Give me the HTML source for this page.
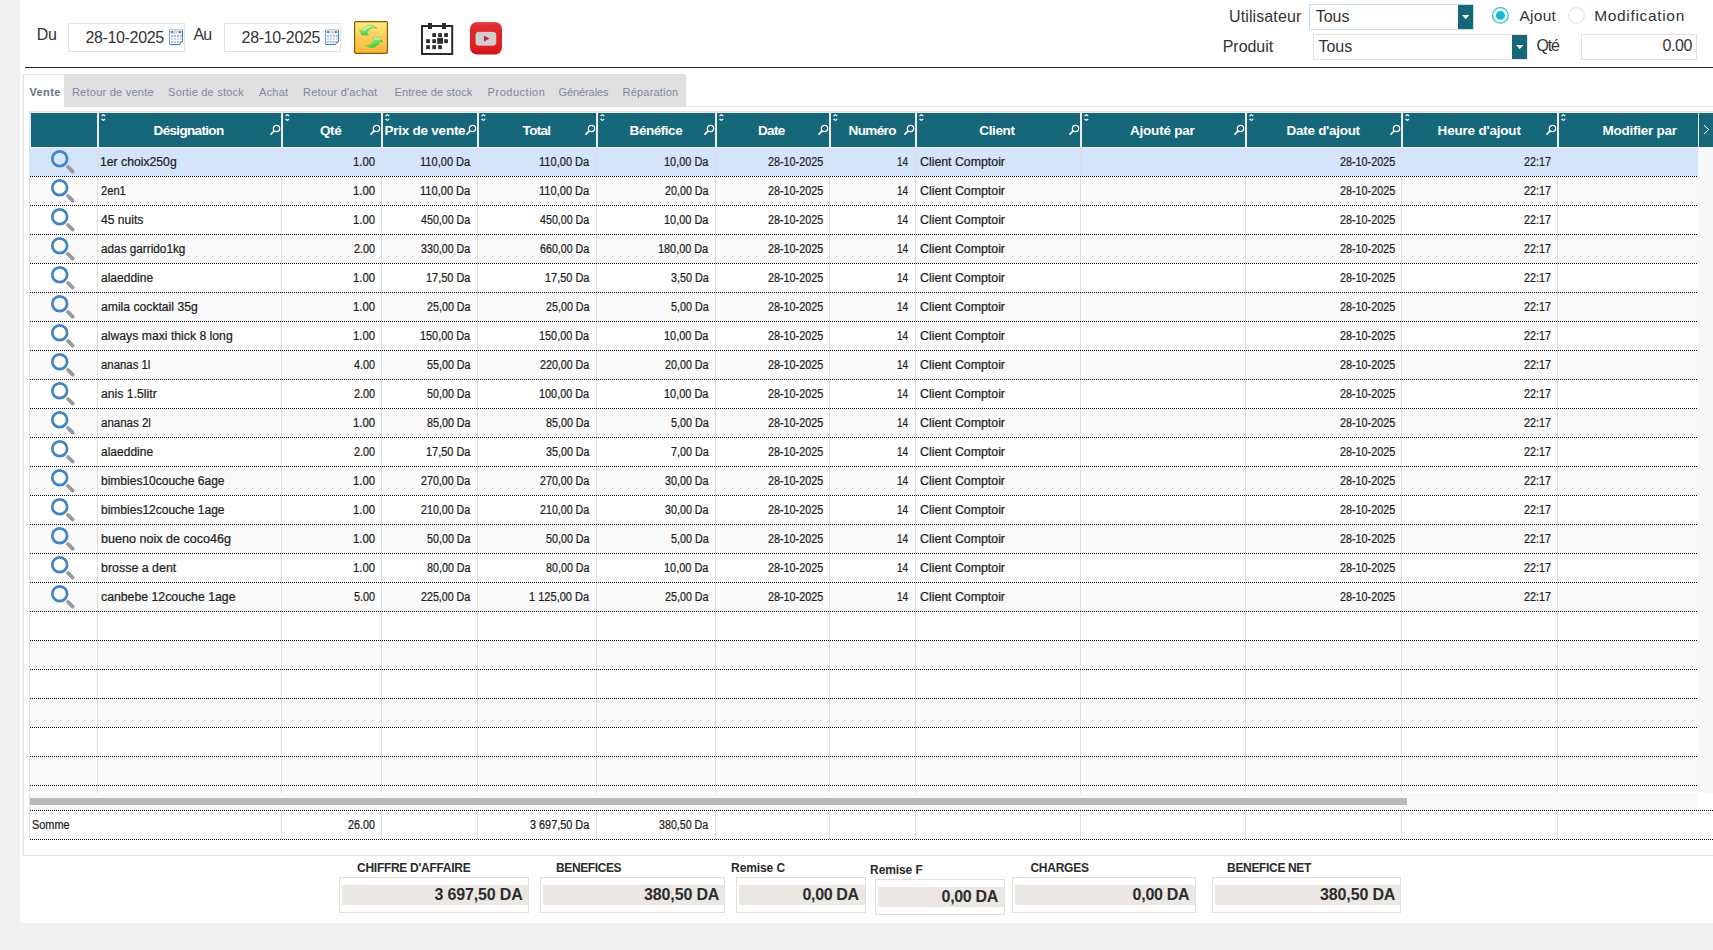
<!DOCTYPE html><html><head><meta charset="utf-8"><title>Etat</title><style>
*{box-sizing:border-box;margin:0;padding:0}
html,body{width:1713px;height:950px;overflow:hidden;background:#fff}
body{position:relative;font-family:"Liberation Sans",sans-serif;color:#222}
.a{position:absolute}
.t{position:absolute;white-space:nowrap;line-height:20px}
.k{-webkit-text-stroke:.22px #1c1c1c}
.inp{position:absolute;border:1px solid #e2e2e2;background:#fff}
.hc{position:absolute;top:113px;height:34px;background:#16677a}
.row{position:absolute;left:30px;width:1668px;height:29px}
.dot{position:absolute;height:1px;background-image:repeating-linear-gradient(90deg,#000 0,#000 1px,transparent 1px,transparent 2px)}
.vs{position:absolute;width:1px;background:#dedede}
.sb{position:absolute;border:1px solid #e0e0e0;background:#fff;height:36px}
.sf{position:absolute;left:2px;right:0;top:7px;height:20px;background:#ebe7e3}
</style></head><body>
<div class="a" style="left:0;top:0;width:20px;height:950px;background:#f0f0f0"></div>
<div class="a" style="left:0;top:923px;width:1713px;height:27px;background:#f0f0f0"></div>
<div class="a" style="left:25px;top:67px;width:1688px;height:1px;background:#222"></div>
<div class="t" style="left:36.80px;top:24.80px;font-size:16px;letter-spacing:-0.40px;color:#333;">Du</div>
<div class="inp" style="left:68px;top:23px;width:117px;height:29px"></div>
<div class="t" style="left:85.40px;top:28.10px;font-size:16px;letter-spacing:-0.34px;color:#333;">28-10-2025</div>
<div class="t" style="left:193.40px;top:24.80px;font-size:16px;letter-spacing:-0.90px;color:#333;">Au</div>
<div class="inp" style="left:224px;top:23px;width:117px;height:29px"></div>
<div class="t" style="left:241.60px;top:28.10px;font-size:16px;letter-spacing:-0.33px;color:#333;">28-10-2025</div>
<svg class="a" style="left:169px;top:29px" width="14" height="16" viewBox="0 0 14 16">
<path d="M.5 .5H13.5V12L10.5 15.5H.5Z" fill="#fff" stroke="#5b9fdc"/>
<path d="M13.5 1V12L10.5 15.5H1" fill="none" stroke="#3a7cc4"/>
<path d="M0 .5H14" stroke="#a8d8f2"/>
<rect x="1.4" y="1.4" width="11.2" height="3.2" fill="#d6d6d6"/>
<path d="M1.8 3L3.6 1.7V4.3Z M12.2 3L10.4 1.7V4.3Z" fill="#333"/>
<g fill="#8fb9ff"><rect x="2" y="6" width="1.9" height="1.9"/><rect x="5" y="6" width="1.9" height="1.9"/><rect x="8" y="6" width="1.9" height="1.9"/><rect x="11" y="6" width="1.9" height="1.9"/>
<rect x="2" y="12" width="1.9" height="1.9"/><rect x="5" y="12" width="1.9" height="1.9"/><rect x="8" y="12" width="1.9" height="1.9"/></g>
<g fill="#cfcfcf"><rect x="2" y="9" width="1.9" height="1.9"/><rect x="5" y="9" width="1.9" height="1.9"/><rect x="8" y="9" width="1.9" height="1.9"/><rect x="11" y="9" width="1.5" height="1.9"/></g>
<path d="M13.2 12.2L10.6 15.2V12.2Z" fill="#a9a9a9"/>
</svg>
<svg class="a" style="left:325px;top:29px" width="14" height="16" viewBox="0 0 14 16">
<path d="M.5 .5H13.5V12L10.5 15.5H.5Z" fill="#fff" stroke="#5b9fdc"/>
<path d="M13.5 1V12L10.5 15.5H1" fill="none" stroke="#3a7cc4"/>
<path d="M0 .5H14" stroke="#a8d8f2"/>
<rect x="1.4" y="1.4" width="11.2" height="3.2" fill="#d6d6d6"/>
<path d="M1.8 3L3.6 1.7V4.3Z M12.2 3L10.4 1.7V4.3Z" fill="#333"/>
<g fill="#8fb9ff"><rect x="2" y="6" width="1.9" height="1.9"/><rect x="5" y="6" width="1.9" height="1.9"/><rect x="8" y="6" width="1.9" height="1.9"/><rect x="11" y="6" width="1.9" height="1.9"/>
<rect x="2" y="12" width="1.9" height="1.9"/><rect x="5" y="12" width="1.9" height="1.9"/><rect x="8" y="12" width="1.9" height="1.9"/></g>
<g fill="#cfcfcf"><rect x="2" y="9" width="1.9" height="1.9"/><rect x="5" y="9" width="1.9" height="1.9"/><rect x="8" y="9" width="1.9" height="1.9"/><rect x="11" y="9" width="1.5" height="1.9"/></g>
<path d="M13.2 12.2L10.6 15.2V12.2Z" fill="#a9a9a9"/>
</svg>
<svg class="a" style="left:354px;top:21px" width="34" height="33" viewBox="0 0 34 33">
<defs><linearGradient id="gy" x1="0" y1="0" x2="0" y2="1"><stop offset="0" stop-color="#ffe97e"/><stop offset="1" stop-color="#ffb43a"/></linearGradient>
<linearGradient id="gg" x1="0" y1="0" x2=".6" y2="1"><stop offset="0" stop-color="#e4fbdc"/><stop offset=".45" stop-color="#7be868"/><stop offset="1" stop-color="#35c92a"/></linearGradient></defs>
<path d="M1.6 .6H32.4L33.4 1.6V31.4L32.4 32.4H1.6L.6 31.4V1.6Z" fill="url(#gy)" stroke="#8a5a06" stroke-width="1.2"/>
<path d="M5.2 8.6L7.6 14.2L14.8 14.2L13.2 12C14 10 16 7.5 20.4 6.6L23 7.8C21.5 5.3 19 4.2 17 4.2C13 4.2 10 6.5 7.2 9.8Z" fill="url(#gg)" stroke="#7cc65f" stroke-width=".5"/>
<path d="M8.6 9.2C11 6 15 4.7 19.6 5.2C16 5.7 12 7.7 9.8 10.2Z" fill="#fff" opacity=".6"/>
<path d="M21.6 6.3L23 7.8L21.2 5.4Z" fill="#2a8f2a"/>
<path d="M11.2 24C13 26 15.5 26.8 18 26.8C22 26.5 25 23 26.6 20.4L28.6 21L25.6 16.2L18.2 16.6L20.6 18.4C19.5 21 17 23.8 13.2 24.4Z" fill="url(#gg)" stroke="#7cc65f" stroke-width=".5"/>
<path d="M20 17L25.4 16.7L26.9 19.3C25 18.3 22.5 18.3 21.3 18.7Z" fill="#fff" opacity=".55"/>
<path d="M28.6 21L27.2 18.9L27 20.5Z" fill="#2a8f2a"/>
</svg>
<svg class="a" style="left:420px;top:22px" width="35" height="34" viewBox="0 0 35 34">
<rect x="2" y="4" width="30.2" height="28" fill="#fff" stroke="#2b2b2b" stroke-width="2"/>
<g fill="#2b2b2b"><rect x="8" y="1" width="4" height="6"/><rect x="22" y="1" width="4" height="6"/>
<rect x="12.3" y="11.1" width="3.7" height="3.9"/><rect x="18.2" y="11.1" width="3.7" height="3.9"/><rect x="24.2" y="11.1" width="3.7" height="3.9"/>
<rect x="6.2" y="17.2" width="3.7" height="3.9"/><rect x="12.3" y="17.2" width="3.7" height="3.9"/><rect x="24.2" y="17.2" width="3.7" height="3.9"/>
<rect x="6.2" y="23.2" width="3.7" height="3.9"/><rect x="12.3" y="23.2" width="3.7" height="3.9"/><rect x="18.2" y="23.2" width="3.7" height="3.9"/>
<rect x="17.2" y="15.8" width="5.8" height="6"/></g></svg>
<svg class="a" style="left:470px;top:22px" width="32" height="33" viewBox="0 0 32 33">
<defs><linearGradient id="gr" x1="0" y1="0" x2="0" y2="1"><stop offset="0" stop-color="#e7484c"/><stop offset=".12" stop-color="#e02a2f"/><stop offset=".75" stop-color="#de1f25"/><stop offset="1" stop-color="#cc1219"/></linearGradient></defs>
<rect x="0" y="0" width="32" height="32.6" rx="7" fill="url(#gr)"/>
<rect x="6" y="10.3" width="19.8" height="12.9" rx="2.4" fill="#cfcfcf" stroke="#d3e6e6" stroke-width=".7"/>
<path d="M14 13.8L19.6 16.6L14 19.4Z" fill="#e01b24"/></svg>

<div class="t" style="left:1229.10px;top:7.10px;font-size:16px;letter-spacing:0.10px;color:#333;">Utilisateur</div>
<div class="inp" style="left:1309px;top:4px;width:165px;height:26px;border-color:#c6dbf4"></div>
<div class="t" style="left:1315.70px;top:7.00px;font-size:16px;letter-spacing:-0.03px;color:#333;">Tous</div>
<div class="a" style="left:1458px;top:5px;width:15px;height:24px;background:#16677a"></div>
<svg class="a" style="left:1462px;top:15px" width="8" height="5"><path d="M0 0H7.4L3.7 4Z" fill="#fff"/></svg>
<div class="t" style="left:1222.70px;top:36.90px;font-size:16px;letter-spacing:-0.03px;color:#333;">Produit</div>
<div class="inp" style="left:1313px;top:34px;width:215px;height:26px"></div>
<div class="t" style="left:1318.50px;top:36.90px;font-size:16px;letter-spacing:-0.03px;color:#333;">Tous</div>
<div class="a" style="left:1512px;top:35px;width:15px;height:24px;background:#16677a"></div>
<svg class="a" style="left:1516px;top:45px" width="8" height="5"><path d="M0 0H7.4L3.7 4Z" fill="#fff"/></svg>
<div class="t" style="left:1536.50px;top:35.60px;font-size:16px;letter-spacing:-1.20px;color:#333;">Qté</div>
<div class="inp" style="left:1581px;top:34px;width:116px;height:26px"></div>
<div class="t" style="left:1662.40px;top:36.40px;font-size:16px;letter-spacing:-0.40px;color:#333;">0.00</div>
<svg class="a" style="left:1491px;top:6px" width="19" height="19"><circle cx="9.4" cy="9.4" r="7.8" fill="#fff" stroke="#22c0da" stroke-width="1.25"/><circle cx="9.4" cy="9.4" r="4.5" fill="#12bcd8"/></svg>
<div class="t" style="left:1519.50px;top:5.80px;font-size:15.5px;letter-spacing:0.27px;color:#333;">Ajout</div>
<svg class="a" style="left:1567px;top:6px" width="19" height="19"><circle cx="9.5" cy="9.4" r="7.8" fill="#fff" stroke="#e4e4e4" stroke-width="1.2"/></svg>
<div class="t" style="left:1594.20px;top:5.80px;font-size:15.5px;letter-spacing:0.67px;color:#333;">Modification</div>
<div class="a" style="left:23px;top:74px;width:1px;height:782px;background:#e0e0e0"></div>
<div class="a" style="left:23px;top:855px;width:1690px;height:1px;background:#e0e0e0"></div>
<div class="a" style="left:24px;top:74px;width:40px;height:1px;background:#e6e6e6"></div>
<div class="a" style="left:64px;top:74px;width:622px;height:33px;background:#e0e0e0"></div>
<div class="a" style="left:686px;top:106px;width:1027px;height:1px;background:#e9e9e9"></div>
<div class="t" style="left:29.40px;top:81.90px;font-size:11px;font-weight:bold;letter-spacing:0.40px;color:#687086;">Vente</div>
<div class="t" style="left:71.90px;top:81.90px;font-size:11px;letter-spacing:0.25px;color:#7d86a0;">Retour de vente</div>
<div class="t" style="left:168.10px;top:81.90px;font-size:11px;letter-spacing:0.20px;color:#7d86a0;">Sortie de stock</div>
<div class="t" style="left:259.10px;top:81.90px;font-size:11px;letter-spacing:0.20px;color:#7d86a0;">Achat</div>
<div class="t" style="left:303.10px;top:81.90px;font-size:11px;letter-spacing:0.22px;color:#7d86a0;">Retour d'achat</div>
<div class="t" style="left:394.60px;top:81.90px;font-size:11px;letter-spacing:0.09px;color:#7d86a0;">Entree de stock</div>
<div class="t" style="left:487.60px;top:81.90px;font-size:11px;letter-spacing:0.52px;color:#7d86a0;">Production</div>
<div class="t" style="left:558.40px;top:81.90px;font-size:11px;letter-spacing:-0.07px;color:#7d86a0;">Générales</div>
<div class="t" style="left:622.50px;top:81.90px;font-size:11px;letter-spacing:0.21px;color:#7d86a0;">Réparation</div>
<div class="a" style="left:29px;top:111px;width:1684px;height:37px;background:#efebea"></div>
<div class="a" style="left:29px;top:111px;width:1684px;height:1px;background:#e3e3e3"></div>
<div class="a" style="left:29px;top:111px;width:1px;height:729px;background:#e3e3e3"></div>
<div class="hc" style="left:31px;width:66px"></div>
<div class="hc" style="left:99px;width:182px"></div>
<div class="t" style="left:153.60px;top:121.00px;font-size:13.5px;font-weight:bold;letter-spacing:-0.67px;color:#fff;">Désignation</div>
<svg class="a" style="left:100.6px;top:113px" width="6" height="9" viewBox="0 0 6 9"><path d="M.5 2.9L2.4 1.7L4.3 2.9M.5 5.9L2.4 7.2L4.3 5.9" fill="none" stroke="#fff" stroke-width="1.2"/></svg>
<svg class="a" style="left:269px;top:124px" width="12" height="12" viewBox="0 0 12 12"><circle cx="7.5" cy="4.5" r="3.2" fill="none" stroke="#fff" stroke-width="1.2"/><path d="M5.1 6.9L2 10.2" stroke="#fff" stroke-width="1.7" stroke-linecap="round"/></svg>
<div class="hc" style="left:283px;width:98px"></div>
<div class="t" style="left:320.10px;top:121.00px;font-size:13.5px;font-weight:bold;letter-spacing:-0.48px;color:#fff;">Qté</div>
<svg class="a" style="left:284.6px;top:113px" width="6" height="9" viewBox="0 0 6 9"><path d="M.5 2.9L2.4 1.7L4.3 2.9M.5 5.9L2.4 7.2L4.3 5.9" fill="none" stroke="#fff" stroke-width="1.2"/></svg>
<svg class="a" style="left:369px;top:124px" width="12" height="12" viewBox="0 0 12 12"><circle cx="7.5" cy="4.5" r="3.2" fill="none" stroke="#fff" stroke-width="1.2"/><path d="M5.1 6.9L2 10.2" stroke="#fff" stroke-width="1.7" stroke-linecap="round"/></svg>
<div class="hc" style="left:383px;width:94px"></div>
<div class="t" style="left:384.60px;top:121.00px;font-size:13.5px;font-weight:bold;letter-spacing:-0.25px;color:#fff;">Prix de vente</div>
<svg class="a" style="left:384.6px;top:113px" width="6" height="9" viewBox="0 0 6 9"><path d="M.5 2.9L2.4 1.7L4.3 2.9M.5 5.9L2.4 7.2L4.3 5.9" fill="none" stroke="#fff" stroke-width="1.2"/></svg>
<svg class="a" style="left:465px;top:124px" width="12" height="12" viewBox="0 0 12 12"><circle cx="7.5" cy="4.5" r="3.2" fill="none" stroke="#fff" stroke-width="1.2"/><path d="M5.1 6.9L2 10.2" stroke="#fff" stroke-width="1.7" stroke-linecap="round"/></svg>
<div class="hc" style="left:479px;width:117px"></div>
<div class="t" style="left:522.60px;top:121.00px;font-size:13.5px;font-weight:bold;letter-spacing:-0.68px;color:#fff;">Total</div>
<svg class="a" style="left:480.6px;top:113px" width="6" height="9" viewBox="0 0 6 9"><path d="M.5 2.9L2.4 1.7L4.3 2.9M.5 5.9L2.4 7.2L4.3 5.9" fill="none" stroke="#fff" stroke-width="1.2"/></svg>
<svg class="a" style="left:584px;top:124px" width="12" height="12" viewBox="0 0 12 12"><circle cx="7.5" cy="4.5" r="3.2" fill="none" stroke="#fff" stroke-width="1.2"/><path d="M5.1 6.9L2 10.2" stroke="#fff" stroke-width="1.7" stroke-linecap="round"/></svg>
<div class="hc" style="left:598px;width:117px"></div>
<div class="t" style="left:629.60px;top:121.00px;font-size:13.5px;font-weight:bold;letter-spacing:-0.46px;color:#fff;">Bénéfice</div>
<svg class="a" style="left:599.6px;top:113px" width="6" height="9" viewBox="0 0 6 9"><path d="M.5 2.9L2.4 1.7L4.3 2.9M.5 5.9L2.4 7.2L4.3 5.9" fill="none" stroke="#fff" stroke-width="1.2"/></svg>
<svg class="a" style="left:703px;top:124px" width="12" height="12" viewBox="0 0 12 12"><circle cx="7.5" cy="4.5" r="3.2" fill="none" stroke="#fff" stroke-width="1.2"/><path d="M5.1 6.9L2 10.2" stroke="#fff" stroke-width="1.7" stroke-linecap="round"/></svg>
<div class="hc" style="left:717px;width:112px"></div>
<div class="t" style="left:758.10px;top:121.00px;font-size:13.5px;font-weight:bold;letter-spacing:-0.73px;color:#fff;">Date</div>
<svg class="a" style="left:718.6px;top:113px" width="6" height="9" viewBox="0 0 6 9"><path d="M.5 2.9L2.4 1.7L4.3 2.9M.5 5.9L2.4 7.2L4.3 5.9" fill="none" stroke="#fff" stroke-width="1.2"/></svg>
<svg class="a" style="left:817px;top:124px" width="12" height="12" viewBox="0 0 12 12"><circle cx="7.5" cy="4.5" r="3.2" fill="none" stroke="#fff" stroke-width="1.2"/><path d="M5.1 6.9L2 10.2" stroke="#fff" stroke-width="1.7" stroke-linecap="round"/></svg>
<div class="hc" style="left:831px;width:84px"></div>
<div class="t" style="left:848.60px;top:121.00px;font-size:13.5px;font-weight:bold;letter-spacing:-0.64px;color:#fff;">Numéro</div>
<svg class="a" style="left:832.6px;top:113px" width="6" height="9" viewBox="0 0 6 9"><path d="M.5 2.9L2.4 1.7L4.3 2.9M.5 5.9L2.4 7.2L4.3 5.9" fill="none" stroke="#fff" stroke-width="1.2"/></svg>
<svg class="a" style="left:903px;top:124px" width="12" height="12" viewBox="0 0 12 12"><circle cx="7.5" cy="4.5" r="3.2" fill="none" stroke="#fff" stroke-width="1.2"/><path d="M5.1 6.9L2 10.2" stroke="#fff" stroke-width="1.7" stroke-linecap="round"/></svg>
<div class="hc" style="left:917px;width:163px"></div>
<div class="t" style="left:979.35px;top:121.00px;font-size:13.5px;font-weight:bold;letter-spacing:-0.39px;color:#fff;">Client</div>
<svg class="a" style="left:918.6px;top:113px" width="6" height="9" viewBox="0 0 6 9"><path d="M.5 2.9L2.4 1.7L4.3 2.9M.5 5.9L2.4 7.2L4.3 5.9" fill="none" stroke="#fff" stroke-width="1.2"/></svg>
<svg class="a" style="left:1068px;top:124px" width="12" height="12" viewBox="0 0 12 12"><circle cx="7.5" cy="4.5" r="3.2" fill="none" stroke="#fff" stroke-width="1.2"/><path d="M5.1 6.9L2 10.2" stroke="#fff" stroke-width="1.7" stroke-linecap="round"/></svg>
<div class="hc" style="left:1082px;width:163px"></div>
<div class="t" style="left:1130.10px;top:121.00px;font-size:13.5px;font-weight:bold;letter-spacing:-0.24px;color:#fff;">Ajouté par</div>
<svg class="a" style="left:1083.6px;top:113px" width="6" height="9" viewBox="0 0 6 9"><path d="M.5 2.9L2.4 1.7L4.3 2.9M.5 5.9L2.4 7.2L4.3 5.9" fill="none" stroke="#fff" stroke-width="1.2"/></svg>
<svg class="a" style="left:1233px;top:124px" width="12" height="12" viewBox="0 0 12 12"><circle cx="7.5" cy="4.5" r="3.2" fill="none" stroke="#fff" stroke-width="1.2"/><path d="M5.1 6.9L2 10.2" stroke="#fff" stroke-width="1.7" stroke-linecap="round"/></svg>
<div class="hc" style="left:1247px;width:154px"></div>
<div class="t" style="left:1286.60px;top:121.00px;font-size:13.5px;font-weight:bold;letter-spacing:-0.29px;color:#fff;">Date d'ajout</div>
<svg class="a" style="left:1248.6px;top:113px" width="6" height="9" viewBox="0 0 6 9"><path d="M.5 2.9L2.4 1.7L4.3 2.9M.5 5.9L2.4 7.2L4.3 5.9" fill="none" stroke="#fff" stroke-width="1.2"/></svg>
<svg class="a" style="left:1389px;top:124px" width="12" height="12" viewBox="0 0 12 12"><circle cx="7.5" cy="4.5" r="3.2" fill="none" stroke="#fff" stroke-width="1.2"/><path d="M5.1 6.9L2 10.2" stroke="#fff" stroke-width="1.7" stroke-linecap="round"/></svg>
<div class="hc" style="left:1403px;width:154px"></div>
<div class="t" style="left:1437.60px;top:121.00px;font-size:13.5px;font-weight:bold;letter-spacing:-0.20px;color:#fff;">Heure d'ajout</div>
<svg class="a" style="left:1404.6px;top:113px" width="6" height="9" viewBox="0 0 6 9"><path d="M.5 2.9L2.4 1.7L4.3 2.9M.5 5.9L2.4 7.2L4.3 5.9" fill="none" stroke="#fff" stroke-width="1.2"/></svg>
<svg class="a" style="left:1545px;top:124px" width="12" height="12" viewBox="0 0 12 12"><circle cx="7.5" cy="4.5" r="3.2" fill="none" stroke="#fff" stroke-width="1.2"/><path d="M5.1 6.9L2 10.2" stroke="#fff" stroke-width="1.7" stroke-linecap="round"/></svg>
<div class="hc" style="left:1559px;width:139px"></div>
<div class="t" style="left:1602.60px;top:121.00px;font-size:13.5px;font-weight:bold;letter-spacing:-0.25px;color:#fff;">Modifier par</div>
<svg class="a" style="left:1560.6px;top:113px" width="6" height="9" viewBox="0 0 6 9"><path d="M.5 2.9L2.4 1.7L4.3 2.9M.5 5.9L2.4 7.2L4.3 5.9" fill="none" stroke="#fff" stroke-width="1.2"/></svg>
<div class="hc" style="left:1699px;width:14px"></div>
<svg class="a" style="left:1702px;top:123px" width="9" height="13" viewBox="0 0 9 13"><path d="M2 2.2L6.7 6.6L2 11" fill="none" stroke="#fff" stroke-width="1"/></svg>
<div class="row" style="top:147px;background:#d4e5fb"></div>
<div class="row" style="top:176px;background:#f9f9f9"></div>
<div class="row" style="top:205px;background:#fff"></div>
<div class="row" style="top:234px;background:#f9f9f9"></div>
<div class="row" style="top:263px;background:#fff"></div>
<div class="row" style="top:292px;background:#f9f9f9"></div>
<div class="row" style="top:321px;background:#fff"></div>
<div class="row" style="top:350px;background:#f9f9f9"></div>
<div class="row" style="top:379px;background:#fff"></div>
<div class="row" style="top:408px;background:#f9f9f9"></div>
<div class="row" style="top:437px;background:#fff"></div>
<div class="row" style="top:466px;background:#f9f9f9"></div>
<div class="row" style="top:495px;background:#fff"></div>
<div class="row" style="top:524px;background:#f9f9f9"></div>
<div class="row" style="top:553px;background:#fff"></div>
<div class="row" style="top:582px;background:#f9f9f9"></div>
<div class="row" style="top:611px;background:#fff"></div>
<div class="row" style="top:640px;background:#f9f9f9"></div>
<div class="row" style="top:669px;background:#fff"></div>
<div class="row" style="top:698px;background:#f9f9f9"></div>
<div class="row" style="top:727px;background:#fff"></div>
<div class="row" style="top:756px;background:#f9f9f9"></div>
<div class="a" style="left:30px;top:147px;width:1683px;height:1px;background:#efecec"></div>
<div class="a" style="left:30px;top:786px;width:1668px;height:7px;background:#fff"></div>
<div class="a" style="left:1698px;top:148px;width:15px;height:645px;background:#f8f8f8"></div>
<div class="vs" style="left:97px;top:148px;height:645px"></div>
<div class="vs" style="left:281px;top:148px;height:645px"></div>
<div class="vs" style="left:381px;top:148px;height:645px"></div>
<div class="vs" style="left:477px;top:148px;height:645px"></div>
<div class="vs" style="left:596px;top:148px;height:645px"></div>
<div class="vs" style="left:715px;top:148px;height:645px"></div>
<div class="vs" style="left:829px;top:148px;height:645px"></div>
<div class="vs" style="left:915px;top:148px;height:645px"></div>
<div class="vs" style="left:1080px;top:148px;height:645px"></div>
<div class="vs" style="left:1245px;top:148px;height:645px"></div>
<div class="vs" style="left:1401px;top:148px;height:645px"></div>
<div class="vs" style="left:1557px;top:148px;height:645px"></div>
<div class="dot" style="left:30px;top:176px;width:1668px"></div>
<div class="dot" style="left:30px;top:205px;width:1668px"></div>
<div class="dot" style="left:30px;top:234px;width:1668px"></div>
<div class="dot" style="left:30px;top:263px;width:1668px"></div>
<div class="dot" style="left:30px;top:292px;width:1668px"></div>
<div class="dot" style="left:30px;top:321px;width:1668px"></div>
<div class="dot" style="left:30px;top:350px;width:1668px"></div>
<div class="dot" style="left:30px;top:379px;width:1668px"></div>
<div class="dot" style="left:30px;top:408px;width:1668px"></div>
<div class="dot" style="left:30px;top:437px;width:1668px"></div>
<div class="dot" style="left:30px;top:466px;width:1668px"></div>
<div class="dot" style="left:30px;top:495px;width:1668px"></div>
<div class="dot" style="left:30px;top:524px;width:1668px"></div>
<div class="dot" style="left:30px;top:553px;width:1668px"></div>
<div class="dot" style="left:30px;top:582px;width:1668px"></div>
<div class="dot" style="left:30px;top:611px;width:1668px"></div>
<div class="dot" style="left:30px;top:640px;width:1668px"></div>
<div class="dot" style="left:30px;top:669px;width:1668px"></div>
<div class="dot" style="left:30px;top:698px;width:1668px"></div>
<div class="dot" style="left:30px;top:727px;width:1668px"></div>
<div class="dot" style="left:30px;top:756px;width:1668px"></div>
<div class="dot" style="left:30px;top:785px;width:1668px"></div>
<svg class="a" style="left:49px;top:148px" width="28" height="28" viewBox="0 0 28 28"><circle cx="10.7" cy="10.8" r="7.4" fill="none" stroke="#4284c0" stroke-width="2.7"/><path d="M19 19L23.7 23.6" stroke="#999" stroke-width="3.8" stroke-linecap="round"/></svg>
<div class="t k" style="left:100.18px;top:151.70px;font-size:12px;color:#1c1c1c;transform-origin:0 0;transform:scaleX(1.0175);">1er choix250g</div>
<div class="t k" style="left:353.25px;top:151.70px;font-size:12px;color:#1c1c1c;transform-origin:0 0;transform:scaleX(0.9459);">1.00</div>
<div class="t k" style="left:420.17px;top:151.70px;font-size:12px;color:#1c1c1c;transform-origin:0 0;transform:scaleX(0.9225);">110,00 Da</div>
<div class="t k" style="left:539.17px;top:151.70px;font-size:12px;color:#1c1c1c;transform-origin:0 0;transform:scaleX(0.9225);">110,00 Da</div>
<div class="t k" style="left:664.08px;top:151.70px;font-size:12px;color:#1c1c1c;transform-origin:0 0;transform:scaleX(0.9129);">10,00 Da</div>
<div class="t k" style="left:767.79px;top:151.70px;font-size:12px;color:#1c1c1c;transform-origin:0 0;transform:scaleX(0.8987);">28-10-2025</div>
<div class="t k" style="left:897.35px;top:151.70px;font-size:12px;color:#1c1c1c;transform-origin:0 0;transform:scaleX(0.8333);">14</div>
<div class="t k" style="left:1339.69px;top:151.70px;font-size:12px;color:#1c1c1c;transform-origin:0 0;transform:scaleX(0.8987);">28-10-2025</div>
<div class="t k" style="left:1524.09px;top:151.70px;font-size:12px;color:#1c1c1c;transform-origin:0 0;transform:scaleX(0.8940);">22:17</div>
<div class="t k" style="left:919.60px;top:151.70px;font-size:12px;color:#1c1c1c;transform-origin:0 0;transform:scaleX(1.0276);">Client Comptoir</div>
<svg class="a" style="left:49px;top:177px" width="28" height="28" viewBox="0 0 28 28"><circle cx="10.7" cy="10.8" r="7.4" fill="none" stroke="#4284c0" stroke-width="2.7"/><path d="M19 19L23.7 23.6" stroke="#999" stroke-width="3.8" stroke-linecap="round"/></svg>
<div class="t k" style="left:101.19px;top:180.70px;font-size:12px;color:#1c1c1c;transform-origin:0 0;transform:scaleX(0.9283);">2en1</div>
<div class="t k" style="left:353.25px;top:180.70px;font-size:12px;color:#1c1c1c;transform-origin:0 0;transform:scaleX(0.9459);">1.00</div>
<div class="t k" style="left:420.17px;top:180.70px;font-size:12px;color:#1c1c1c;transform-origin:0 0;transform:scaleX(0.9225);">110,00 Da</div>
<div class="t k" style="left:539.17px;top:180.70px;font-size:12px;color:#1c1c1c;transform-origin:0 0;transform:scaleX(0.9225);">110,00 Da</div>
<div class="t k" style="left:664.99px;top:180.70px;font-size:12px;color:#1c1c1c;transform-origin:0 0;transform:scaleX(0.8943);">20,00 Da</div>
<div class="t k" style="left:767.79px;top:180.70px;font-size:12px;color:#1c1c1c;transform-origin:0 0;transform:scaleX(0.8987);">28-10-2025</div>
<div class="t k" style="left:897.35px;top:180.70px;font-size:12px;color:#1c1c1c;transform-origin:0 0;transform:scaleX(0.8333);">14</div>
<div class="t k" style="left:1339.69px;top:180.70px;font-size:12px;color:#1c1c1c;transform-origin:0 0;transform:scaleX(0.8987);">28-10-2025</div>
<div class="t k" style="left:1524.09px;top:180.70px;font-size:12px;color:#1c1c1c;transform-origin:0 0;transform:scaleX(0.8940);">22:17</div>
<div class="t k" style="left:919.60px;top:180.70px;font-size:12px;color:#1c1c1c;transform-origin:0 0;transform:scaleX(1.0276);">Client Comptoir</div>
<svg class="a" style="left:49px;top:206px" width="28" height="28" viewBox="0 0 28 28"><circle cx="10.7" cy="10.8" r="7.4" fill="none" stroke="#4284c0" stroke-width="2.7"/><path d="M19 19L23.7 23.6" stroke="#999" stroke-width="3.8" stroke-linecap="round"/></svg>
<div class="t k" style="left:101.20px;top:209.70px;font-size:12px;color:#1c1c1c;transform-origin:0 0;transform:scaleX(1.0071);">45 nuits</div>
<div class="t k" style="left:353.25px;top:209.70px;font-size:12px;color:#1c1c1c;transform-origin:0 0;transform:scaleX(0.9459);">1.00</div>
<div class="t k" style="left:421.09px;top:209.70px;font-size:12px;color:#1c1c1c;transform-origin:0 0;transform:scaleX(0.8897);">450,00 Da</div>
<div class="t k" style="left:540.09px;top:209.70px;font-size:12px;color:#1c1c1c;transform-origin:0 0;transform:scaleX(0.8897);">450,00 Da</div>
<div class="t k" style="left:664.08px;top:209.70px;font-size:12px;color:#1c1c1c;transform-origin:0 0;transform:scaleX(0.9129);">10,00 Da</div>
<div class="t k" style="left:767.79px;top:209.70px;font-size:12px;color:#1c1c1c;transform-origin:0 0;transform:scaleX(0.8987);">28-10-2025</div>
<div class="t k" style="left:897.35px;top:209.70px;font-size:12px;color:#1c1c1c;transform-origin:0 0;transform:scaleX(0.8333);">14</div>
<div class="t k" style="left:1339.69px;top:209.70px;font-size:12px;color:#1c1c1c;transform-origin:0 0;transform:scaleX(0.8987);">28-10-2025</div>
<div class="t k" style="left:1524.09px;top:209.70px;font-size:12px;color:#1c1c1c;transform-origin:0 0;transform:scaleX(0.8940);">22:17</div>
<div class="t k" style="left:919.60px;top:209.70px;font-size:12px;color:#1c1c1c;transform-origin:0 0;transform:scaleX(1.0276);">Client Comptoir</div>
<svg class="a" style="left:49px;top:235px" width="28" height="28" viewBox="0 0 28 28"><circle cx="10.7" cy="10.8" r="7.4" fill="none" stroke="#4284c0" stroke-width="2.7"/><path d="M19 19L23.7 23.6" stroke="#999" stroke-width="3.8" stroke-linecap="round"/></svg>
<div class="t k" style="left:101.20px;top:238.70px;font-size:12px;color:#1c1c1c;transform-origin:0 0;transform:scaleX(0.9803);">adas garrido1kg</div>
<div class="t k" style="left:354.19px;top:238.70px;font-size:12px;color:#1c1c1c;transform-origin:0 0;transform:scaleX(0.9052);">2.00</div>
<div class="t k" style="left:421.09px;top:238.70px;font-size:12px;color:#1c1c1c;transform-origin:0 0;transform:scaleX(0.8897);">330,00 Da</div>
<div class="t k" style="left:540.09px;top:238.70px;font-size:12px;color:#1c1c1c;transform-origin:0 0;transform:scaleX(0.8897);">660,00 Da</div>
<div class="t k" style="left:658.08px;top:238.70px;font-size:12px;color:#1c1c1c;transform-origin:0 0;transform:scaleX(0.9058);">180,00 Da</div>
<div class="t k" style="left:767.79px;top:238.70px;font-size:12px;color:#1c1c1c;transform-origin:0 0;transform:scaleX(0.8987);">28-10-2025</div>
<div class="t k" style="left:897.35px;top:238.70px;font-size:12px;color:#1c1c1c;transform-origin:0 0;transform:scaleX(0.8333);">14</div>
<div class="t k" style="left:1339.69px;top:238.70px;font-size:12px;color:#1c1c1c;transform-origin:0 0;transform:scaleX(0.8987);">28-10-2025</div>
<div class="t k" style="left:1524.09px;top:238.70px;font-size:12px;color:#1c1c1c;transform-origin:0 0;transform:scaleX(0.8940);">22:17</div>
<div class="t k" style="left:919.60px;top:238.70px;font-size:12px;color:#1c1c1c;transform-origin:0 0;transform:scaleX(1.0276);">Client Comptoir</div>
<svg class="a" style="left:49px;top:264px" width="28" height="28" viewBox="0 0 28 28"><circle cx="10.7" cy="10.8" r="7.4" fill="none" stroke="#4284c0" stroke-width="2.7"/><path d="M19 19L23.7 23.6" stroke="#999" stroke-width="3.8" stroke-linecap="round"/></svg>
<div class="t k" style="left:101.20px;top:267.70px;font-size:12px;color:#1c1c1c;transform-origin:0 0;transform:scaleX(1.0010);">alaeddine</div>
<div class="t k" style="left:353.25px;top:267.70px;font-size:12px;color:#1c1c1c;transform-origin:0 0;transform:scaleX(0.9459);">1.00</div>
<div class="t k" style="left:426.18px;top:267.70px;font-size:12px;color:#1c1c1c;transform-origin:0 0;transform:scaleX(0.9129);">17,50 Da</div>
<div class="t k" style="left:545.18px;top:267.70px;font-size:12px;color:#1c1c1c;transform-origin:0 0;transform:scaleX(0.9129);">17,50 Da</div>
<div class="t k" style="left:670.99px;top:267.70px;font-size:12px;color:#1c1c1c;transform-origin:0 0;transform:scaleX(0.9005);">3,50 Da</div>
<div class="t k" style="left:767.79px;top:267.70px;font-size:12px;color:#1c1c1c;transform-origin:0 0;transform:scaleX(0.8987);">28-10-2025</div>
<div class="t k" style="left:897.35px;top:267.70px;font-size:12px;color:#1c1c1c;transform-origin:0 0;transform:scaleX(0.8333);">14</div>
<div class="t k" style="left:1339.69px;top:267.70px;font-size:12px;color:#1c1c1c;transform-origin:0 0;transform:scaleX(0.8987);">28-10-2025</div>
<div class="t k" style="left:1524.09px;top:267.70px;font-size:12px;color:#1c1c1c;transform-origin:0 0;transform:scaleX(0.8940);">22:17</div>
<div class="t k" style="left:919.60px;top:267.70px;font-size:12px;color:#1c1c1c;transform-origin:0 0;transform:scaleX(1.0276);">Client Comptoir</div>
<svg class="a" style="left:49px;top:293px" width="28" height="28" viewBox="0 0 28 28"><circle cx="10.7" cy="10.8" r="7.4" fill="none" stroke="#4284c0" stroke-width="2.7"/><path d="M19 19L23.7 23.6" stroke="#999" stroke-width="3.8" stroke-linecap="round"/></svg>
<div class="t k" style="left:101.20px;top:296.70px;font-size:12px;color:#1c1c1c;transform-origin:0 0;transform:scaleX(1.0137);">amila cocktail 35g</div>
<div class="t k" style="left:353.25px;top:296.70px;font-size:12px;color:#1c1c1c;transform-origin:0 0;transform:scaleX(0.9459);">1.00</div>
<div class="t k" style="left:427.09px;top:296.70px;font-size:12px;color:#1c1c1c;transform-origin:0 0;transform:scaleX(0.8943);">25,00 Da</div>
<div class="t k" style="left:546.09px;top:296.70px;font-size:12px;color:#1c1c1c;transform-origin:0 0;transform:scaleX(0.8943);">25,00 Da</div>
<div class="t k" style="left:670.99px;top:296.70px;font-size:12px;color:#1c1c1c;transform-origin:0 0;transform:scaleX(0.9005);">5,00 Da</div>
<div class="t k" style="left:767.79px;top:296.70px;font-size:12px;color:#1c1c1c;transform-origin:0 0;transform:scaleX(0.8987);">28-10-2025</div>
<div class="t k" style="left:897.35px;top:296.70px;font-size:12px;color:#1c1c1c;transform-origin:0 0;transform:scaleX(0.8333);">14</div>
<div class="t k" style="left:1339.69px;top:296.70px;font-size:12px;color:#1c1c1c;transform-origin:0 0;transform:scaleX(0.8987);">28-10-2025</div>
<div class="t k" style="left:1524.09px;top:296.70px;font-size:12px;color:#1c1c1c;transform-origin:0 0;transform:scaleX(0.8940);">22:17</div>
<div class="t k" style="left:919.60px;top:296.70px;font-size:12px;color:#1c1c1c;transform-origin:0 0;transform:scaleX(1.0276);">Client Comptoir</div>
<svg class="a" style="left:49px;top:322px" width="28" height="28" viewBox="0 0 28 28"><circle cx="10.7" cy="10.8" r="7.4" fill="none" stroke="#4284c0" stroke-width="2.7"/><path d="M19 19L23.7 23.6" stroke="#999" stroke-width="3.8" stroke-linecap="round"/></svg>
<div class="t k" style="left:101.20px;top:325.70px;font-size:12px;color:#1c1c1c;transform-origin:0 0;transform:scaleX(1.0178);">always maxi thick 8 long</div>
<div class="t k" style="left:353.25px;top:325.70px;font-size:12px;color:#1c1c1c;transform-origin:0 0;transform:scaleX(0.9459);">1.00</div>
<div class="t k" style="left:420.18px;top:325.70px;font-size:12px;color:#1c1c1c;transform-origin:0 0;transform:scaleX(0.9058);">150,00 Da</div>
<div class="t k" style="left:539.18px;top:325.70px;font-size:12px;color:#1c1c1c;transform-origin:0 0;transform:scaleX(0.9058);">150,00 Da</div>
<div class="t k" style="left:664.08px;top:325.70px;font-size:12px;color:#1c1c1c;transform-origin:0 0;transform:scaleX(0.9129);">10,00 Da</div>
<div class="t k" style="left:767.79px;top:325.70px;font-size:12px;color:#1c1c1c;transform-origin:0 0;transform:scaleX(0.8987);">28-10-2025</div>
<div class="t k" style="left:897.35px;top:325.70px;font-size:12px;color:#1c1c1c;transform-origin:0 0;transform:scaleX(0.8333);">14</div>
<div class="t k" style="left:1339.69px;top:325.70px;font-size:12px;color:#1c1c1c;transform-origin:0 0;transform:scaleX(0.8987);">28-10-2025</div>
<div class="t k" style="left:1524.09px;top:325.70px;font-size:12px;color:#1c1c1c;transform-origin:0 0;transform:scaleX(0.8940);">22:17</div>
<div class="t k" style="left:919.60px;top:325.70px;font-size:12px;color:#1c1c1c;transform-origin:0 0;transform:scaleX(1.0276);">Client Comptoir</div>
<svg class="a" style="left:49px;top:351px" width="28" height="28" viewBox="0 0 28 28"><circle cx="10.7" cy="10.8" r="7.4" fill="none" stroke="#4284c0" stroke-width="2.7"/><path d="M19 19L23.7 23.6" stroke="#999" stroke-width="3.8" stroke-linecap="round"/></svg>
<div class="t k" style="left:101.19px;top:354.70px;font-size:12px;color:#1c1c1c;transform-origin:0 0;transform:scaleX(0.9483);">ananas 1l</div>
<div class="t k" style="left:354.19px;top:354.70px;font-size:12px;color:#1c1c1c;transform-origin:0 0;transform:scaleX(0.9052);">4.00</div>
<div class="t k" style="left:427.09px;top:354.70px;font-size:12px;color:#1c1c1c;transform-origin:0 0;transform:scaleX(0.8943);">55,00 Da</div>
<div class="t k" style="left:540.09px;top:354.70px;font-size:12px;color:#1c1c1c;transform-origin:0 0;transform:scaleX(0.8897);">220,00 Da</div>
<div class="t k" style="left:664.99px;top:354.70px;font-size:12px;color:#1c1c1c;transform-origin:0 0;transform:scaleX(0.8943);">20,00 Da</div>
<div class="t k" style="left:767.79px;top:354.70px;font-size:12px;color:#1c1c1c;transform-origin:0 0;transform:scaleX(0.8987);">28-10-2025</div>
<div class="t k" style="left:897.35px;top:354.70px;font-size:12px;color:#1c1c1c;transform-origin:0 0;transform:scaleX(0.8333);">14</div>
<div class="t k" style="left:1339.69px;top:354.70px;font-size:12px;color:#1c1c1c;transform-origin:0 0;transform:scaleX(0.8987);">28-10-2025</div>
<div class="t k" style="left:1524.09px;top:354.70px;font-size:12px;color:#1c1c1c;transform-origin:0 0;transform:scaleX(0.8940);">22:17</div>
<div class="t k" style="left:919.60px;top:354.70px;font-size:12px;color:#1c1c1c;transform-origin:0 0;transform:scaleX(1.0276);">Client Comptoir</div>
<svg class="a" style="left:49px;top:380px" width="28" height="28" viewBox="0 0 28 28"><circle cx="10.7" cy="10.8" r="7.4" fill="none" stroke="#4284c0" stroke-width="2.7"/><path d="M19 19L23.7 23.6" stroke="#999" stroke-width="3.8" stroke-linecap="round"/></svg>
<div class="t k" style="left:101.20px;top:383.70px;font-size:12px;color:#1c1c1c;transform-origin:0 0;transform:scaleX(1.0190);">anis 1.5litr</div>
<div class="t k" style="left:354.19px;top:383.70px;font-size:12px;color:#1c1c1c;transform-origin:0 0;transform:scaleX(0.9052);">2.00</div>
<div class="t k" style="left:427.09px;top:383.70px;font-size:12px;color:#1c1c1c;transform-origin:0 0;transform:scaleX(0.8943);">50,00 Da</div>
<div class="t k" style="left:539.18px;top:383.70px;font-size:12px;color:#1c1c1c;transform-origin:0 0;transform:scaleX(0.9058);">100,00 Da</div>
<div class="t k" style="left:664.08px;top:383.70px;font-size:12px;color:#1c1c1c;transform-origin:0 0;transform:scaleX(0.9129);">10,00 Da</div>
<div class="t k" style="left:767.79px;top:383.70px;font-size:12px;color:#1c1c1c;transform-origin:0 0;transform:scaleX(0.8987);">28-10-2025</div>
<div class="t k" style="left:897.35px;top:383.70px;font-size:12px;color:#1c1c1c;transform-origin:0 0;transform:scaleX(0.8333);">14</div>
<div class="t k" style="left:1339.69px;top:383.70px;font-size:12px;color:#1c1c1c;transform-origin:0 0;transform:scaleX(0.8987);">28-10-2025</div>
<div class="t k" style="left:1524.09px;top:383.70px;font-size:12px;color:#1c1c1c;transform-origin:0 0;transform:scaleX(0.8940);">22:17</div>
<div class="t k" style="left:919.60px;top:383.70px;font-size:12px;color:#1c1c1c;transform-origin:0 0;transform:scaleX(1.0276);">Client Comptoir</div>
<svg class="a" style="left:49px;top:409px" width="28" height="28" viewBox="0 0 28 28"><circle cx="10.7" cy="10.8" r="7.4" fill="none" stroke="#4284c0" stroke-width="2.7"/><path d="M19 19L23.7 23.6" stroke="#999" stroke-width="3.8" stroke-linecap="round"/></svg>
<div class="t k" style="left:101.20px;top:412.70px;font-size:12px;color:#1c1c1c;transform-origin:0 0;transform:scaleX(0.9579);">ananas 2l</div>
<div class="t k" style="left:353.25px;top:412.70px;font-size:12px;color:#1c1c1c;transform-origin:0 0;transform:scaleX(0.9459);">1.00</div>
<div class="t k" style="left:427.09px;top:412.70px;font-size:12px;color:#1c1c1c;transform-origin:0 0;transform:scaleX(0.8943);">85,00 Da</div>
<div class="t k" style="left:546.09px;top:412.70px;font-size:12px;color:#1c1c1c;transform-origin:0 0;transform:scaleX(0.8943);">85,00 Da</div>
<div class="t k" style="left:670.99px;top:412.70px;font-size:12px;color:#1c1c1c;transform-origin:0 0;transform:scaleX(0.9005);">5,00 Da</div>
<div class="t k" style="left:767.79px;top:412.70px;font-size:12px;color:#1c1c1c;transform-origin:0 0;transform:scaleX(0.8987);">28-10-2025</div>
<div class="t k" style="left:897.35px;top:412.70px;font-size:12px;color:#1c1c1c;transform-origin:0 0;transform:scaleX(0.8333);">14</div>
<div class="t k" style="left:1339.69px;top:412.70px;font-size:12px;color:#1c1c1c;transform-origin:0 0;transform:scaleX(0.8987);">28-10-2025</div>
<div class="t k" style="left:1524.09px;top:412.70px;font-size:12px;color:#1c1c1c;transform-origin:0 0;transform:scaleX(0.8940);">22:17</div>
<div class="t k" style="left:919.60px;top:412.70px;font-size:12px;color:#1c1c1c;transform-origin:0 0;transform:scaleX(1.0276);">Client Comptoir</div>
<svg class="a" style="left:49px;top:438px" width="28" height="28" viewBox="0 0 28 28"><circle cx="10.7" cy="10.8" r="7.4" fill="none" stroke="#4284c0" stroke-width="2.7"/><path d="M19 19L23.7 23.6" stroke="#999" stroke-width="3.8" stroke-linecap="round"/></svg>
<div class="t k" style="left:101.20px;top:441.70px;font-size:12px;color:#1c1c1c;transform-origin:0 0;transform:scaleX(1.0010);">alaeddine</div>
<div class="t k" style="left:354.19px;top:441.70px;font-size:12px;color:#1c1c1c;transform-origin:0 0;transform:scaleX(0.9052);">2.00</div>
<div class="t k" style="left:426.18px;top:441.70px;font-size:12px;color:#1c1c1c;transform-origin:0 0;transform:scaleX(0.9129);">17,50 Da</div>
<div class="t k" style="left:546.09px;top:441.70px;font-size:12px;color:#1c1c1c;transform-origin:0 0;transform:scaleX(0.8943);">35,00 Da</div>
<div class="t k" style="left:670.99px;top:441.70px;font-size:12px;color:#1c1c1c;transform-origin:0 0;transform:scaleX(0.9005);">7,00 Da</div>
<div class="t k" style="left:767.79px;top:441.70px;font-size:12px;color:#1c1c1c;transform-origin:0 0;transform:scaleX(0.8987);">28-10-2025</div>
<div class="t k" style="left:897.35px;top:441.70px;font-size:12px;color:#1c1c1c;transform-origin:0 0;transform:scaleX(0.8333);">14</div>
<div class="t k" style="left:1339.69px;top:441.70px;font-size:12px;color:#1c1c1c;transform-origin:0 0;transform:scaleX(0.8987);">28-10-2025</div>
<div class="t k" style="left:1524.09px;top:441.70px;font-size:12px;color:#1c1c1c;transform-origin:0 0;transform:scaleX(0.8940);">22:17</div>
<div class="t k" style="left:919.60px;top:441.70px;font-size:12px;color:#1c1c1c;transform-origin:0 0;transform:scaleX(1.0276);">Client Comptoir</div>
<svg class="a" style="left:49px;top:467px" width="28" height="28" viewBox="0 0 28 28"><circle cx="10.7" cy="10.8" r="7.4" fill="none" stroke="#4284c0" stroke-width="2.7"/><path d="M19 19L23.7 23.6" stroke="#999" stroke-width="3.8" stroke-linecap="round"/></svg>
<div class="t k" style="left:101.20px;top:470.70px;font-size:12px;color:#1c1c1c;transform-origin:0 0;transform:scaleX(1.0008);">bimbies10couche 6age</div>
<div class="t k" style="left:353.25px;top:470.70px;font-size:12px;color:#1c1c1c;transform-origin:0 0;transform:scaleX(0.9459);">1.00</div>
<div class="t k" style="left:421.09px;top:470.70px;font-size:12px;color:#1c1c1c;transform-origin:0 0;transform:scaleX(0.8897);">270,00 Da</div>
<div class="t k" style="left:540.09px;top:470.70px;font-size:12px;color:#1c1c1c;transform-origin:0 0;transform:scaleX(0.8897);">270,00 Da</div>
<div class="t k" style="left:664.99px;top:470.70px;font-size:12px;color:#1c1c1c;transform-origin:0 0;transform:scaleX(0.8943);">30,00 Da</div>
<div class="t k" style="left:767.79px;top:470.70px;font-size:12px;color:#1c1c1c;transform-origin:0 0;transform:scaleX(0.8987);">28-10-2025</div>
<div class="t k" style="left:897.35px;top:470.70px;font-size:12px;color:#1c1c1c;transform-origin:0 0;transform:scaleX(0.8333);">14</div>
<div class="t k" style="left:1339.69px;top:470.70px;font-size:12px;color:#1c1c1c;transform-origin:0 0;transform:scaleX(0.8987);">28-10-2025</div>
<div class="t k" style="left:1524.09px;top:470.70px;font-size:12px;color:#1c1c1c;transform-origin:0 0;transform:scaleX(0.8940);">22:17</div>
<div class="t k" style="left:919.60px;top:470.70px;font-size:12px;color:#1c1c1c;transform-origin:0 0;transform:scaleX(1.0276);">Client Comptoir</div>
<svg class="a" style="left:49px;top:496px" width="28" height="28" viewBox="0 0 28 28"><circle cx="10.7" cy="10.8" r="7.4" fill="none" stroke="#4284c0" stroke-width="2.7"/><path d="M19 19L23.7 23.6" stroke="#999" stroke-width="3.8" stroke-linecap="round"/></svg>
<div class="t k" style="left:101.20px;top:499.70px;font-size:12px;color:#1c1c1c;transform-origin:0 0;transform:scaleX(1.0008);">bimbies12couche 1age</div>
<div class="t k" style="left:353.25px;top:499.70px;font-size:12px;color:#1c1c1c;transform-origin:0 0;transform:scaleX(0.9459);">1.00</div>
<div class="t k" style="left:421.09px;top:499.70px;font-size:12px;color:#1c1c1c;transform-origin:0 0;transform:scaleX(0.8897);">210,00 Da</div>
<div class="t k" style="left:540.09px;top:499.70px;font-size:12px;color:#1c1c1c;transform-origin:0 0;transform:scaleX(0.8897);">210,00 Da</div>
<div class="t k" style="left:664.99px;top:499.70px;font-size:12px;color:#1c1c1c;transform-origin:0 0;transform:scaleX(0.8943);">30,00 Da</div>
<div class="t k" style="left:767.79px;top:499.70px;font-size:12px;color:#1c1c1c;transform-origin:0 0;transform:scaleX(0.8987);">28-10-2025</div>
<div class="t k" style="left:897.35px;top:499.70px;font-size:12px;color:#1c1c1c;transform-origin:0 0;transform:scaleX(0.8333);">14</div>
<div class="t k" style="left:1339.69px;top:499.70px;font-size:12px;color:#1c1c1c;transform-origin:0 0;transform:scaleX(0.8987);">28-10-2025</div>
<div class="t k" style="left:1524.09px;top:499.70px;font-size:12px;color:#1c1c1c;transform-origin:0 0;transform:scaleX(0.8940);">22:17</div>
<div class="t k" style="left:919.60px;top:499.70px;font-size:12px;color:#1c1c1c;transform-origin:0 0;transform:scaleX(1.0276);">Client Comptoir</div>
<svg class="a" style="left:49px;top:525px" width="28" height="28" viewBox="0 0 28 28"><circle cx="10.7" cy="10.8" r="7.4" fill="none" stroke="#4284c0" stroke-width="2.7"/><path d="M19 19L23.7 23.6" stroke="#999" stroke-width="3.8" stroke-linecap="round"/></svg>
<div class="t k" style="left:101.20px;top:528.70px;font-size:12px;color:#1c1c1c;transform-origin:0 0;transform:scaleX(1.0467);">bueno noix de coco46g</div>
<div class="t k" style="left:353.25px;top:528.70px;font-size:12px;color:#1c1c1c;transform-origin:0 0;transform:scaleX(0.9459);">1.00</div>
<div class="t k" style="left:427.09px;top:528.70px;font-size:12px;color:#1c1c1c;transform-origin:0 0;transform:scaleX(0.8943);">50,00 Da</div>
<div class="t k" style="left:546.09px;top:528.70px;font-size:12px;color:#1c1c1c;transform-origin:0 0;transform:scaleX(0.8943);">50,00 Da</div>
<div class="t k" style="left:670.99px;top:528.70px;font-size:12px;color:#1c1c1c;transform-origin:0 0;transform:scaleX(0.9005);">5,00 Da</div>
<div class="t k" style="left:767.79px;top:528.70px;font-size:12px;color:#1c1c1c;transform-origin:0 0;transform:scaleX(0.8987);">28-10-2025</div>
<div class="t k" style="left:897.35px;top:528.70px;font-size:12px;color:#1c1c1c;transform-origin:0 0;transform:scaleX(0.8333);">14</div>
<div class="t k" style="left:1339.69px;top:528.70px;font-size:12px;color:#1c1c1c;transform-origin:0 0;transform:scaleX(0.8987);">28-10-2025</div>
<div class="t k" style="left:1524.09px;top:528.70px;font-size:12px;color:#1c1c1c;transform-origin:0 0;transform:scaleX(0.8940);">22:17</div>
<div class="t k" style="left:919.60px;top:528.70px;font-size:12px;color:#1c1c1c;transform-origin:0 0;transform:scaleX(1.0276);">Client Comptoir</div>
<svg class="a" style="left:49px;top:554px" width="28" height="28" viewBox="0 0 28 28"><circle cx="10.7" cy="10.8" r="7.4" fill="none" stroke="#4284c0" stroke-width="2.7"/><path d="M19 19L23.7 23.6" stroke="#999" stroke-width="3.8" stroke-linecap="round"/></svg>
<div class="t k" style="left:101.20px;top:557.70px;font-size:12px;color:#1c1c1c;transform-origin:0 0;transform:scaleX(1.0355);">brosse a dent</div>
<div class="t k" style="left:353.25px;top:557.70px;font-size:12px;color:#1c1c1c;transform-origin:0 0;transform:scaleX(0.9459);">1.00</div>
<div class="t k" style="left:427.09px;top:557.70px;font-size:12px;color:#1c1c1c;transform-origin:0 0;transform:scaleX(0.8943);">80,00 Da</div>
<div class="t k" style="left:546.09px;top:557.70px;font-size:12px;color:#1c1c1c;transform-origin:0 0;transform:scaleX(0.8943);">80,00 Da</div>
<div class="t k" style="left:664.08px;top:557.70px;font-size:12px;color:#1c1c1c;transform-origin:0 0;transform:scaleX(0.9129);">10,00 Da</div>
<div class="t k" style="left:767.79px;top:557.70px;font-size:12px;color:#1c1c1c;transform-origin:0 0;transform:scaleX(0.8987);">28-10-2025</div>
<div class="t k" style="left:897.35px;top:557.70px;font-size:12px;color:#1c1c1c;transform-origin:0 0;transform:scaleX(0.8333);">14</div>
<div class="t k" style="left:1339.69px;top:557.70px;font-size:12px;color:#1c1c1c;transform-origin:0 0;transform:scaleX(0.8987);">28-10-2025</div>
<div class="t k" style="left:1524.09px;top:557.70px;font-size:12px;color:#1c1c1c;transform-origin:0 0;transform:scaleX(0.8940);">22:17</div>
<div class="t k" style="left:919.60px;top:557.70px;font-size:12px;color:#1c1c1c;transform-origin:0 0;transform:scaleX(1.0276);">Client Comptoir</div>
<svg class="a" style="left:49px;top:583px" width="28" height="28" viewBox="0 0 28 28"><circle cx="10.7" cy="10.8" r="7.4" fill="none" stroke="#4284c0" stroke-width="2.7"/><path d="M19 19L23.7 23.6" stroke="#999" stroke-width="3.8" stroke-linecap="round"/></svg>
<div class="t k" style="left:101.20px;top:586.70px;font-size:12px;color:#1c1c1c;transform-origin:0 0;transform:scaleX(1.0229);">canbebe 12couche 1age</div>
<div class="t k" style="left:354.19px;top:586.70px;font-size:12px;color:#1c1c1c;transform-origin:0 0;transform:scaleX(0.9052);">5.00</div>
<div class="t k" style="left:421.09px;top:586.70px;font-size:12px;color:#1c1c1c;transform-origin:0 0;transform:scaleX(0.8897);">225,00 Da</div>
<div class="t k" style="left:529.17px;top:586.70px;font-size:12px;color:#1c1c1c;transform-origin:0 0;transform:scaleX(0.9202);">1 125,00 Da</div>
<div class="t k" style="left:664.99px;top:586.70px;font-size:12px;color:#1c1c1c;transform-origin:0 0;transform:scaleX(0.8943);">25,00 Da</div>
<div class="t k" style="left:767.79px;top:586.70px;font-size:12px;color:#1c1c1c;transform-origin:0 0;transform:scaleX(0.8987);">28-10-2025</div>
<div class="t k" style="left:897.35px;top:586.70px;font-size:12px;color:#1c1c1c;transform-origin:0 0;transform:scaleX(0.8333);">14</div>
<div class="t k" style="left:1339.69px;top:586.70px;font-size:12px;color:#1c1c1c;transform-origin:0 0;transform:scaleX(0.8987);">28-10-2025</div>
<div class="t k" style="left:1524.09px;top:586.70px;font-size:12px;color:#1c1c1c;transform-origin:0 0;transform:scaleX(0.8940);">22:17</div>
<div class="t k" style="left:919.60px;top:586.70px;font-size:12px;color:#1c1c1c;transform-origin:0 0;transform:scaleX(1.0276);">Client Comptoir</div>
<div class="a" style="left:30px;top:793px;width:1668px;height:17px;background:#f9f9f9"></div>
<div class="a" style="left:30px;top:798px;width:1377px;height:7px;background:#b9b9b9"></div>
<div class="dot" style="left:30px;top:810px;width:1683px"></div>
<div class="dot" style="left:30px;top:839px;width:1683px"></div>
<div class="vs" style="left:281px;top:811px;height:28px"></div>
<div class="vs" style="left:381px;top:811px;height:28px"></div>
<div class="vs" style="left:477px;top:811px;height:28px"></div>
<div class="vs" style="left:596px;top:811px;height:28px"></div>
<div class="vs" style="left:715px;top:811px;height:28px"></div>
<div class="vs" style="left:829px;top:811px;height:28px"></div>
<div class="vs" style="left:915px;top:811px;height:28px"></div>
<div class="vs" style="left:1080px;top:811px;height:28px"></div>
<div class="vs" style="left:1245px;top:811px;height:28px"></div>
<div class="vs" style="left:1401px;top:811px;height:28px"></div>
<div class="vs" style="left:1557px;top:811px;height:28px"></div>
<div class="t k" style="left:32.39px;top:815.00px;font-size:12px;color:#1c1c1c;transform-origin:0 0;transform:scaleX(0.9102);">Somme</div>
<div class="t k" style="left:348.49px;top:815.00px;font-size:12px;color:#1c1c1c;transform-origin:0 0;transform:scaleX(0.8940);">26.00</div>
<div class="t k" style="left:530.09px;top:815.00px;font-size:12px;color:#1c1c1c;transform-origin:0 0;transform:scaleX(0.9063);">3 697,50 Da</div>
<div class="t k" style="left:658.99px;top:815.00px;font-size:12px;color:#1c1c1c;transform-origin:0 0;transform:scaleX(0.8897);">380,50 Da</div>
<div class="sb" style="left:339px;top:877px;width:190px"><div class="sf"></div></div>
<div class="t" style="left:357.10px;top:858.00px;font-size:12px;font-weight:bold;letter-spacing:-0.29px;color:#2b2b2b;">CHIFFRE D'AFFAIRE</div>
<div class="t" style="left:434.60px;top:885.00px;font-size:16px;font-weight:bold;letter-spacing:-0.17px;color:#2b2b2b;">3 697,50 DA</div>
<div class="sb" style="left:540px;top:877px;width:185px"><div class="sf"></div></div>
<div class="t" style="left:556.10px;top:858.00px;font-size:12px;font-weight:bold;letter-spacing:-0.40px;color:#2b2b2b;">BENEFICES</div>
<div class="t" style="left:644.10px;top:885.00px;font-size:16px;font-weight:bold;letter-spacing:-0.15px;color:#2b2b2b;">380,50 DA</div>
<div class="sb" style="left:736px;top:877px;width:130px"><div class="sf"></div></div>
<div class="t" style="left:731.10px;top:858.00px;font-size:12px;font-weight:bold;letter-spacing:-0.10px;color:#2b2b2b;">Remise C</div>
<div class="t" style="left:802.60px;top:885.00px;font-size:16px;font-weight:bold;letter-spacing:-0.37px;color:#2b2b2b;">0,00 DA</div>
<div class="sb" style="left:875px;top:879px;width:130px"><div class="sf"></div></div>
<div class="t" style="left:870.10px;top:860.00px;font-size:12px;font-weight:bold;letter-spacing:-0.10px;color:#2b2b2b;">Remise F</div>
<div class="t" style="left:941.60px;top:887.00px;font-size:16px;font-weight:bold;letter-spacing:-0.33px;color:#2b2b2b;">0,00 DA</div>
<div class="sb" style="left:1012px;top:877px;width:184px"><div class="sf"></div></div>
<div class="t" style="left:1030.40px;top:858.00px;font-size:12px;font-weight:bold;letter-spacing:-0.25px;color:#2b2b2b;">CHARGES</div>
<div class="t" style="left:1132.60px;top:885.00px;font-size:16px;font-weight:bold;letter-spacing:-0.28px;color:#2b2b2b;">0,00 DA</div>
<div class="sb" style="left:1212px;top:877px;width:189px"><div class="sf"></div></div>
<div class="t" style="left:1227.10px;top:858.00px;font-size:12px;font-weight:bold;letter-spacing:-0.34px;color:#2b2b2b;">BENEFICE NET</div>
<div class="t" style="left:1320.10px;top:885.00px;font-size:16px;font-weight:bold;letter-spacing:-0.15px;color:#2b2b2b;">380,50 DA</div>
</body></html>
